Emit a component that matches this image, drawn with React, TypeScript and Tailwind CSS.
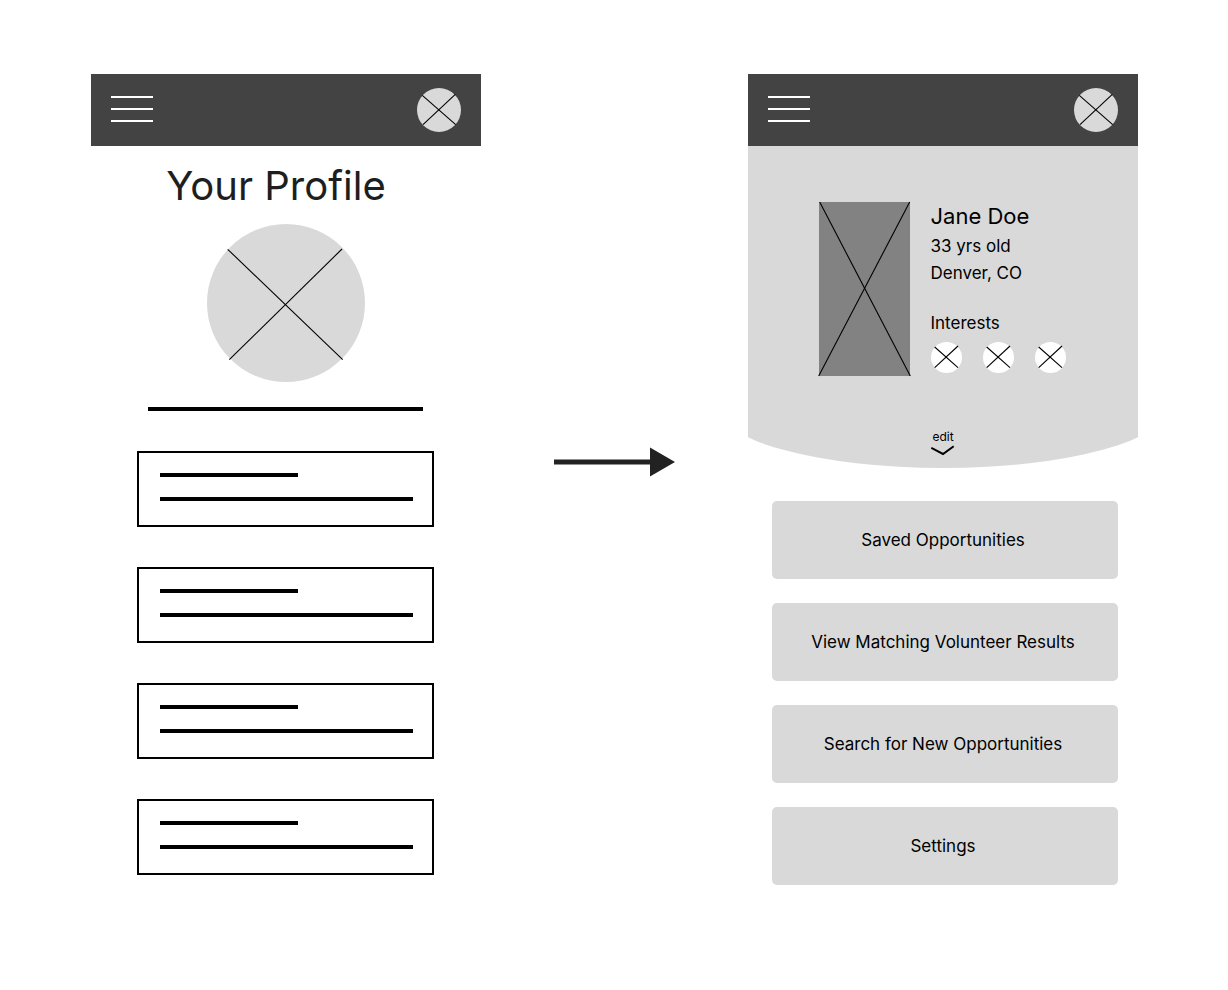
type Line = [number, number, number, number];

const AVATAR_LINES: Line[] = [
  [5.3, 7.3, 38.7, 36.7],
  [38.3, 6.3, 6, 36.7],
];
const PORTRAIT_LINES: Line[] = [
  [20.7, 25.3, 135.7, 135.7],
  [135, 25, 22.3, 135.7],
];
const INTEREST_LINES: Line[] = [
  [3.7, 5, 27, 25.7],
  [27, 4, 3.7, 25.7],
];
const PHOTO_LINES: Line[] = [
  [0.7, 0, 91.3, 174],
  [90.7, 0, -0.3, 174],
];

function Cross({ width, height, lines }: { width: number; height: number; lines: Line[] }) {
  return (
    <svg
      className="block overflow-visible"
      width={width}
      height={height}
      viewBox={`0 0 ${width} ${height}`}
      stroke="#000"
      strokeWidth="1.1"
      aria-hidden="true"
    >
      {lines.map(([x1, y1, x2, y2], i) => (
        <line key={i} x1={x1} y1={y1} x2={x2} y2={y2} />
      ))}
    </svg>
  );
}

function TopBar() {
  return (
    <header className="flex h-18 items-center justify-between bg-[#434343] px-5">
      <button type="button" aria-label="Menu" className="flex w-[42px] flex-col gap-[10px] pb-0.5">
        <span className="h-0.5 w-full bg-white" />
        <span className="h-0.5 w-full bg-white" />
        <span className="h-0.5 w-full bg-white" />
      </button>
      <button type="button" aria-label="Account" className="size-11 rounded-full bg-[#d9d9d9]">
        <Cross width={44} height={44} lines={AVATAR_LINES} />
      </button>
    </header>
  );
}

function EntryBox() {
  return (
    <li className="flex h-19 flex-col gap-5 border-2 border-black pt-5 pr-[19px] pl-[21px]">
      <span className="h-1 w-[138px] bg-black" />
      <span className="h-1 w-full bg-black" />
    </li>
  );
}

function ProfileBefore() {
  return (
    <section>
      <TopBar />
      <h1 className="mt-4 pr-5 text-center text-[40px] leading-12 text-[#1e1e1e]">Your Profile</h1>
      <div className="mx-auto mt-[14px] size-[158px] rounded-full bg-[#d9d9d9]">
        <Cross width={158} height={158} lines={PORTRAIT_LINES} />
      </div>
      <div className="mt-[25px] mr-[58px] ml-[57px] h-1 bg-black" />
      <ul className="mt-10 mr-[47px] ml-[46px] flex flex-col gap-10">
        <EntryBox />
        <EntryBox />
        <EntryBox />
        <EntryBox />
      </ul>
    </section>
  );
}

function ProfileCard() {
  return (
    <div className="overflow-hidden">
      <div className="-mx-[8%] h-[322px] bg-[#d9d9d9] pt-14 [border-radius:0_0_50%_50%/0_0_62px_62px]">
        <div className="flex justify-center gap-[21px] pr-0.5">
          <div className="h-[174px] w-[91px] bg-[#828282]">
            <Cross width={91} height={174} lines={PHOTO_LINES} />
          </div>
          <div>
            <h2 className="text-[22px] leading-7">Jane Doe</h2>
            <p className="mt-[3px] text-[17px] leading-[27px]">33 yrs old</p>
            <p className="text-[17px] leading-[27px]">Denver, CO</p>
            <h3 className="mt-6 text-[17px] leading-6">Interests</h3>
            <ul className="mt-[7px] flex gap-[21px]">
              {[0, 1, 2].map((i) => (
                <li key={i} className="size-[31px] rounded-full bg-white">
                  <Cross width={31} height={31} lines={INTEREST_LINES} />
                </li>
              ))}
            </ul>
          </div>
        </div>
        <button type="button" className="mx-auto mt-[53px] flex flex-col items-center text-xs">
          edit
          <svg className="block" width="24" height="12" viewBox="0 0 24 12" fill="none" aria-hidden="true">
            <path d="M0.3 2.8L12 9L22.7 1.2" stroke="#000" strokeWidth="2" />
          </svg>
        </button>
      </div>
    </div>
  );
}

const ACTIONS = [
  "Saved Opportunities",
  "View Matching Volunteer Results",
  "Search for New Opportunities",
  "Settings",
];

function ProfileAfter() {
  return (
    <section>
      <TopBar />
      <ProfileCard />
      <nav className="mt-[33px] mr-5 ml-6 flex flex-col gap-6">
        {ACTIONS.map((label) => (
          <button
            key={label}
            type="button"
            className="h-[78px] rounded-[5px] bg-[#d9d9d9] pr-1 text-[17px] leading-6"
          >
            {label}
          </button>
        ))}
      </nav>
    </section>
  );
}

export default function App() {
  return (
    <main className="grid min-h-screen grid-cols-[390fr_267fr_390fr] bg-white pt-[74px] pr-[90px] pb-[74px] pl-[91px] font-['Inter',sans-serif] text-black">
      <ProfileBefore />
      <div className="flex justify-center pt-[373px]">
        <svg className="block" width="121" height="30" viewBox="0 0 121 30" fill="#222" aria-hidden="true">
          <path d="M0 12.5H96V0.5L121 15L96 29.5V17.5H0Z" />
        </svg>
      </div>
      <ProfileAfter />
    </main>
  );
}
